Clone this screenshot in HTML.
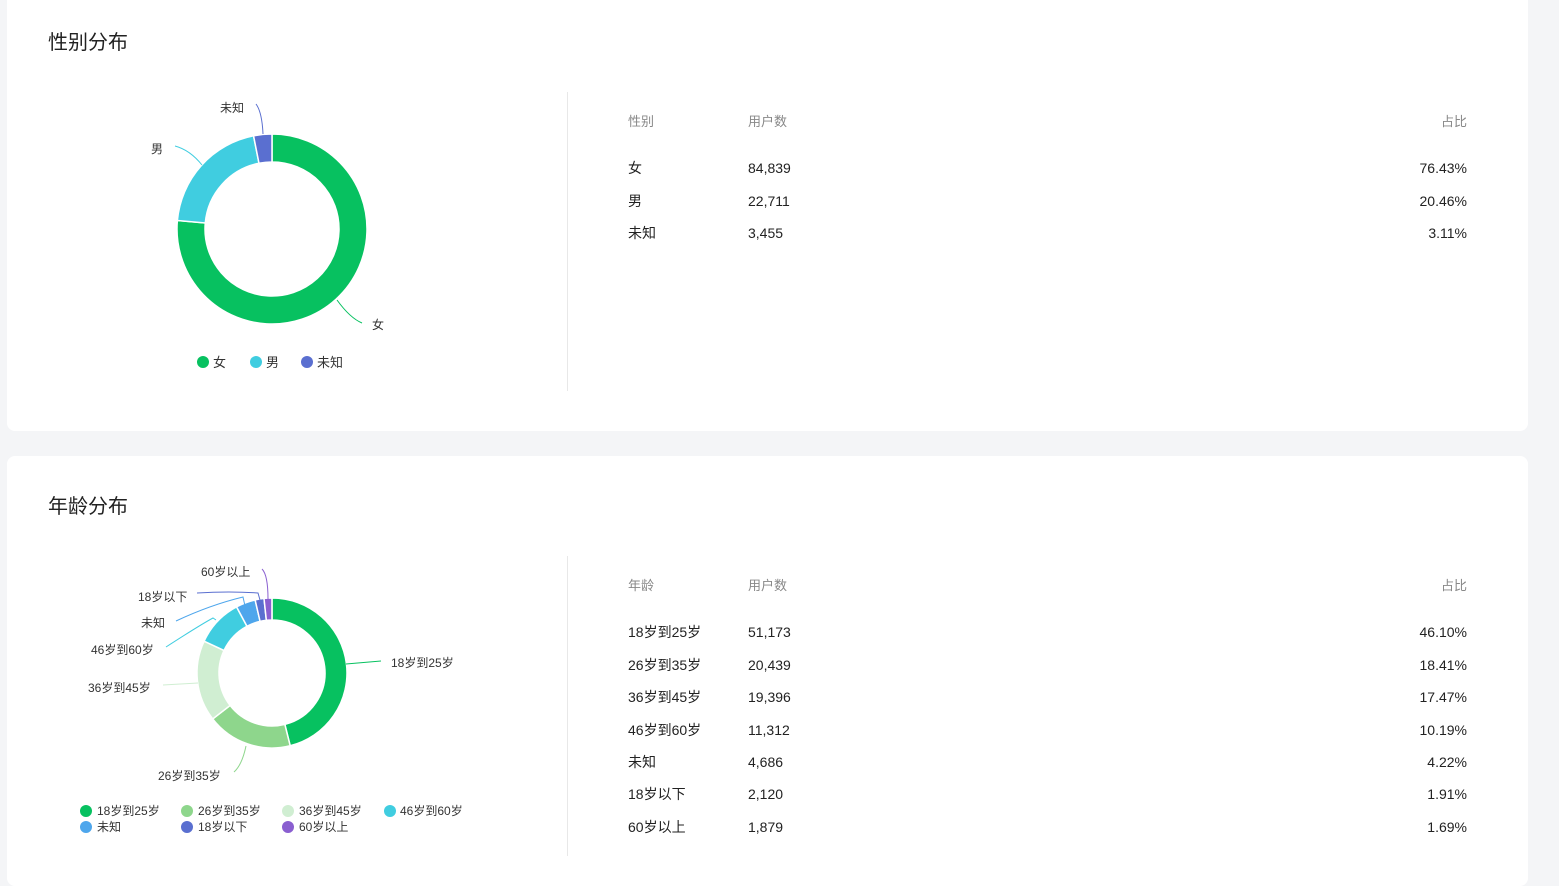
<!DOCTYPE html>
<html><head><meta charset="utf-8">
<style>
*{margin:0;padding:0;box-sizing:border-box}
body{width:1559px;height:871px;background:#f4f5f7;overflow:hidden;font-family:"Liberation Sans","Noto Sans CJK SC",sans-serif;color:#222;position:relative}
.card{position:absolute;left:7px;width:1521px;background:#fff;border-radius:8px}
.title{position:absolute;left:41px;font-size:20px;color:#222}
.div{position:absolute;left:560px;width:1px;background:#e8e8e8}
.t{position:absolute;font-size:14px;line-height:16px;white-space:nowrap}
.h{color:#888;font-size:13px}
.r{text-align:right;width:200px}
svg{position:absolute;left:0;top:0}
svg text{font-family:"Liberation Sans","Noto Sans CJK SC",sans-serif;font-size:12px;fill:#333}
</style></head><body>
<div class="card" style="top:-10px;height:441px">
 <div class="title" style="top:36px">性别分布</div>
 <div class="div" style="top:102px;height:299px"></div>
</div>
<div class="card" style="top:456px;height:430px">
 <div class="title" style="top:34px">年龄分布</div>
 <div class="div" style="top:100px;height:300px"></div>
</div>

<div class="t h" style="left:628px;top:114px">性别</div>
<div class="t h" style="left:748px;top:114px">用户数</div>
<div class="t h r" style="left:1267px;top:114px">占比</div>
<div class="t" style="left:628px;top:160px">女</div><div class="t" style="left:748px;top:160px">84,839</div><div class="t r" style="left:1267px;top:160px">76.43%</div>
<div class="t" style="left:628px;top:193px">男</div><div class="t" style="left:748px;top:193px">22,711</div><div class="t r" style="left:1267px;top:193px">20.46%</div>
<div class="t" style="left:628px;top:225px">未知</div><div class="t" style="left:748px;top:225px">3,455</div><div class="t r" style="left:1267px;top:225px">3.11%</div>

<div class="t h" style="left:628px;top:578px">年龄</div>
<div class="t h" style="left:748px;top:578px">用户数</div>
<div class="t h r" style="left:1267px;top:578px">占比</div>
<div class="t" style="left:628px;top:624px">18岁到25岁</div><div class="t" style="left:748px;top:624px">51,173</div><div class="t r" style="left:1267px;top:624px">46.10%</div>
<div class="t" style="left:628px;top:657px">26岁到35岁</div><div class="t" style="left:748px;top:657px">20,439</div><div class="t r" style="left:1267px;top:657px">18.41%</div>
<div class="t" style="left:628px;top:689px">36岁到45岁</div><div class="t" style="left:748px;top:689px">19,396</div><div class="t r" style="left:1267px;top:689px">17.47%</div>
<div class="t" style="left:628px;top:722px">46岁到60岁</div><div class="t" style="left:748px;top:722px">11,312</div><div class="t r" style="left:1267px;top:722px">10.19%</div>
<div class="t" style="left:628px;top:754px">未知</div><div class="t" style="left:748px;top:754px">4,686</div><div class="t r" style="left:1267px;top:754px">4.22%</div>
<div class="t" style="left:628px;top:786px">18岁以下</div><div class="t" style="left:748px;top:786px">2,120</div><div class="t r" style="left:1267px;top:786px">1.91%</div>
<div class="t" style="left:628px;top:819px">60岁以上</div><div class="t" style="left:748px;top:819px">1,879</div><div class="t r" style="left:1267px;top:819px">1.69%</div>

<svg width="1559" height="871" id="s">
 <g id="g1"></g><g id="g2"></g>
 <path d="M337,300 Q350,318 362,323" stroke="#07c160" fill="none"/>
 <text x="372" y="329">女</text>
 <path d="M202,165 Q190,150 175,146" stroke="#40cde0" fill="none"/>
 <text x="151" y="153">男</text>
 <path d="M263,134 Q262,112 256,104" stroke="#5a6fd0" fill="none"/>
 <text x="220" y="112">未知</text>
 <circle cx="203" cy="362" r="6" fill="#07c160"/><text x="213" y="367" style="font-size:13px">女</text>
 <circle cx="256" cy="362" r="6" fill="#40cde0"/><text x="266" y="367" style="font-size:13px">男</text>
 <circle cx="307" cy="362" r="6" fill="#5a6fd0"/><text x="317" y="367" style="font-size:13px">未知</text>
 <path d="M346,664 L381,661" stroke="#07c160" fill="none"/><text x="391" y="667">18岁到25岁</text>
 <path d="M246,746 Q242,765 234,772" stroke="#8ed68c" fill="none"/><text x="158" y="780">26岁到35岁</text>
 <path d="M198,683 L163,685" stroke="#d0eed2" fill="none"/><text x="88" y="692">36岁到45岁</text>
 <path d="M216,620 L213,618 Q200,625 166,647" stroke="#40cde0" fill="none"/><text x="91" y="654">46岁到60岁</text>
 <path d="M245,606 L243,597 Q210,605 176,621" stroke="#4ea6ec" fill="none"/><text x="141" y="627">未知</text>
 <path d="M260,600 L258,593 Q230,591 197,593" stroke="#5a6fd0" fill="none"/><text x="138" y="601">18岁以下</text>
 <path d="M268,599 Q268,575 262,569" stroke="#8a5fd0" fill="none"/><text x="201" y="576">60岁以上</text>
 <g style="font-size:12px">
 <circle cx="86" cy="811" r="6" fill="#07c160"/><text x="97" y="815">18岁到25岁</text>
 <circle cx="187" cy="811" r="6" fill="#8ed68c"/><text x="198" y="815">26岁到35岁</text>
 <circle cx="288" cy="811" r="6" fill="#d0eed2"/><text x="299" y="815">36岁到45岁</text>
 <circle cx="390" cy="811" r="6" fill="#40cde0"/><text x="400" y="815">46岁到60岁</text>
 <circle cx="86" cy="827" r="6" fill="#4ea6ec"/><text x="97" y="831">未知</text>
 <circle cx="187" cy="827" r="6" fill="#5a6fd0"/><text x="198" y="831">18岁以下</text>
 <circle cx="288" cy="827" r="6" fill="#8a5fd0"/><text x="299" y="831">60岁以上</text>
 </g>
</svg>
<script>
function donut(id,cx,cy,ro,ri,data,cols){
 var g=document.getElementById(id),a=0,s='';
 for(var i=0;i<data.length;i++){
  var a0=a,a1=a+data[i]/100*2*Math.PI;a=a1;
  var p=function(r,t){return (cx+r*Math.sin(t)).toFixed(2)+','+(cy-r*Math.cos(t)).toFixed(2)};
  var lg=(a1-a0)>Math.PI?1:0;
  s+='<path d="M'+p(ro,a0)+' A'+ro+','+ro+' 0 '+lg+' 1 '+p(ro,a1)+' L'+p(ri,a1)+' A'+ri+','+ri+' 0 '+lg+' 0 '+p(ri,a0)+' Z" fill="'+cols[i]+'" stroke="#fff" stroke-width="1.5"/>';
 }
 g.innerHTML=s;
}
donut('g1',272,229,95,67,[76.43,20.46,3.11],['#07c160','#40cde0','#5a6fd0']);
donut('g2',272,673,75,53,[46.10,18.41,17.47,10.19,4.22,1.91,1.69],['#07c160','#8ed68c','#d0eed2','#40cde0','#4ea6ec','#5a6fd0','#8a5fd0']);
</script>
</body></html>
